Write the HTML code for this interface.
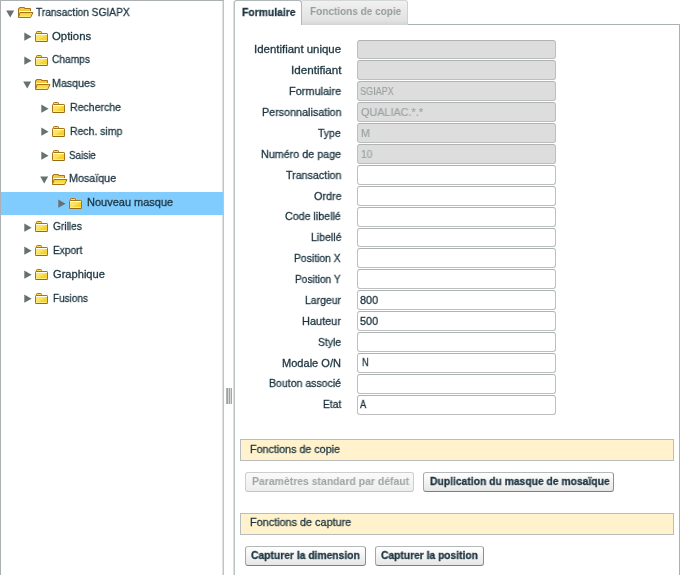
<!DOCTYPE html>
<html><head><meta charset="utf-8"><style>
html,body{margin:0;padding:0;width:680px;height:575px;overflow:hidden;background:#fff;}
body{position:relative;font-family:'Liberation Sans', sans-serif;}
.t{position:absolute;white-space:pre;font-size:11px;line-height:11px;transform-origin:0 0;will-change:transform;-webkit-text-stroke:0.3px;}
.ic{position:absolute;display:block;}
#left{position:absolute;left:0;top:0;width:222px;height:600px;border:1px solid #abb1b3;border-right-color:#c0c4c5;border-bottom:none;box-shadow:inset -1px 0 0 #dfe1e2;}
#sel{position:absolute;left:1px;top:192px;width:222px;height:23px;background:#80ccff;}
#grip{position:absolute;left:226px;top:388px;width:6px;height:16px;background:linear-gradient(90deg,#b0b3b3 0 1px,#9fa3a3 1px 2px,#d4d6d6 2px 3px,#9fa3a3 3px 4px,#d4d6d6 4px 5px,#a3a7a7 5px 6px);}
#panel{position:absolute;left:234px;top:24px;width:444px;height:600px;border:1px solid #aab3b3;border-left-color:#b9c0c0;border-bottom:none;box-shadow:-1px 0 0 #dde1e1;}
#tab1{position:absolute;left:234px;top:0;width:66px;height:24px;border:1px solid #b0b7b7;border-left-color:#b9c0c0;border-bottom:none;border-radius:3px 3px 0 0;background:#fff;box-shadow:-1px 0 0 #dde1e1;}
#tab2{position:absolute;left:301px;top:0;width:106px;height:24px;border-top:1px solid #d2d6d6;border-right:1px solid #cdd1d1;border-radius:2px 3px 0 0;background:linear-gradient(#f1f1f1,#e2e2e2 80%,#d3d5d5);}
.inp{position:absolute;left:357px;width:197px;height:18px;border:1px solid #bbbfbf;border-top-color:#adb2b2;border-radius:3px;background:#fff;}
.inp.dis{background:#dddddd;border-color:#babebe;border-top-color:#b0b4b4;}
.hdr{position:absolute;left:240px;width:432px;height:20px;border:1px solid #b8bcbc;background:#fff2cc;}
.btn{position:absolute;height:18px;border:1px solid #a3a8a8;border-top-color:#b3b8b8;border-right-color:#8a8f8f;border-bottom-color:#7a7f7f;border-radius:3px;background:linear-gradient(#ffffff,#e6e6e6);}
.btn.dis{border-color:#cbcfcf;border-bottom-color:#c0c4c4;background:linear-gradient(#fafafa,#ededed);}
</style></head><body>
<div id="left"></div>
<div id="sel"></div>
<div id="grip"></div>
<div id="panel"></div>
<div id="tab2"></div>
<div id="tab1"></div>
<div class="inp dis" style="top:40px;height:17px"></div>
<div class="inp dis" style="top:60px;height:18px"></div>
<div class="inp dis" style="top:81px;height:18px"></div>
<div class="inp dis" style="top:102px;height:18px"></div>
<div class="inp dis" style="top:123px;height:18px"></div>
<div class="inp dis" style="top:144px;height:18px"></div>
<div class="inp" style="top:165px;height:18px"></div>
<div class="inp" style="top:186px;height:18px"></div>
<div class="inp" style="top:207px;height:18px"></div>
<div class="inp" style="top:228px;height:17px"></div>
<div class="inp" style="top:248px;height:18px"></div>
<div class="inp" style="top:269px;height:18px"></div>
<div class="inp" style="top:290px;height:18px"></div>
<div class="inp" style="top:311px;height:18px"></div>
<div class="inp" style="top:332px;height:18px"></div>
<div class="inp" style="top:353px;height:18px"></div>
<div class="inp" style="top:374px;height:18px"></div>
<div class="inp" style="top:395px;height:18px"></div>
<div class="hdr" style="top:439px"></div>
<div class="hdr" style="top:513px"></div>
<div class="btn dis" style="left:245px;top:472px;width:167px"></div>
<div class="btn" style="left:423px;top:472px;width:189px"></div>
<div class="btn" style="left:245px;top:546px;width:119px"></div>
<div class="btn" style="left:375px;top:546px;width:107px"></div>
<svg class="ic" style="left:6px;top:10px" width="10" height="9" viewBox="0 0 10 9"><path d="M0.2 0.5 L8.2 0.5 L4.2 7.6 Z" fill="#687071"/></svg>
<svg class="ic" style="left:18px;top:7px" width="16" height="12" viewBox="0 0 16 12">
<defs><linearGradient id="g0" x1="0" y1="0" x2="0" y2="1"><stop offset="0" stop-color="#f3cf30"/><stop offset="0.6" stop-color="#f8df50"/><stop offset="1" stop-color="#fff49a"/></linearGradient></defs>
<path d="M0.5 10.5 V1.5 H1.5 V0.5 H6.5 V1.5 H12.5 V4.5" fill="#f1cb3c" stroke="#a8741a" stroke-width="1"/>
<rect x="1.5" y="4" width="11.5" height="1.6" fill="#ffffff"/>
<path d="M0.5 10.5 L2 5.5 H15 L12.6 10.5 Z" fill="url(#g0)" stroke="#a8741a" stroke-width="1" stroke-linejoin="round"/>
</svg>
<svg class="ic" style="left:24px;top:32px" width="9" height="10" viewBox="0 0 9 10"><path d="M0.3 0.6 L7.6 4.7 L0.3 8.8 Z" fill="#687071"/></svg>
<svg class="ic" style="left:35px;top:31px" width="14" height="12" viewBox="0 0 14 12">
<defs><linearGradient id="g1" x1="0" y1="0" x2="1" y2="1"><stop offset="0" stop-color="#fdeb86"/><stop offset="0.5" stop-color="#fbe060"/><stop offset="0.55" stop-color="#f7d638"/><stop offset="1" stop-color="#f3cc2c"/></linearGradient></defs>
<path d="M1.5 2.5 V1.3 Q1.5 0.5 2.3 0.5 H5.7 Q6.5 0.5 6.5 1.3 V2.5" fill="#fbe04a" stroke="#a8741a" stroke-width="1"/>
<rect x="0.5" y="2.5" width="12" height="8" rx="0.6" fill="url(#g1)" stroke="#a8741a" stroke-width="1"/>
<path d="M1 3.5 H12" stroke="#fffdf2" stroke-width="1"/>
<path d="M1.5 9.5 H11.5" stroke="#fff39a" stroke-width="1" opacity="0.8"/>
<path d="M0.5 10.5 H12.5" stroke="#8e5f10" stroke-width="1" opacity="0.5"/>
</svg>
<svg class="ic" style="left:24px;top:56px" width="9" height="10" viewBox="0 0 9 10"><path d="M0.3 0.6 L7.6 4.7 L0.3 8.8 Z" fill="#687071"/></svg>
<svg class="ic" style="left:35px;top:55px" width="14" height="12" viewBox="0 0 14 12">
<defs><linearGradient id="g2" x1="0" y1="0" x2="1" y2="1"><stop offset="0" stop-color="#fdeb86"/><stop offset="0.5" stop-color="#fbe060"/><stop offset="0.55" stop-color="#f7d638"/><stop offset="1" stop-color="#f3cc2c"/></linearGradient></defs>
<path d="M1.5 2.5 V1.3 Q1.5 0.5 2.3 0.5 H5.7 Q6.5 0.5 6.5 1.3 V2.5" fill="#fbe04a" stroke="#a8741a" stroke-width="1"/>
<rect x="0.5" y="2.5" width="12" height="8" rx="0.6" fill="url(#g2)" stroke="#a8741a" stroke-width="1"/>
<path d="M1 3.5 H12" stroke="#fffdf2" stroke-width="1"/>
<path d="M1.5 9.5 H11.5" stroke="#fff39a" stroke-width="1" opacity="0.8"/>
<path d="M0.5 10.5 H12.5" stroke="#8e5f10" stroke-width="1" opacity="0.5"/>
</svg>
<svg class="ic" style="left:23px;top:81px" width="10" height="9" viewBox="0 0 10 9"><path d="M0.2 0.5 L8.2 0.5 L4.2 7.6 Z" fill="#687071"/></svg>
<svg class="ic" style="left:35px;top:79px" width="16" height="12" viewBox="0 0 16 12">
<defs><linearGradient id="g3" x1="0" y1="0" x2="0" y2="1"><stop offset="0" stop-color="#f3cf30"/><stop offset="0.6" stop-color="#f8df50"/><stop offset="1" stop-color="#fff49a"/></linearGradient></defs>
<path d="M0.5 10.5 V1.5 H1.5 V0.5 H6.5 V1.5 H12.5 V4.5" fill="#f1cb3c" stroke="#a8741a" stroke-width="1"/>
<rect x="1.5" y="4" width="11.5" height="1.6" fill="#ffffff"/>
<path d="M0.5 10.5 L2 5.5 H15 L12.6 10.5 Z" fill="url(#g3)" stroke="#a8741a" stroke-width="1" stroke-linejoin="round"/>
</svg>
<svg class="ic" style="left:41px;top:104px" width="9" height="10" viewBox="0 0 9 10"><path d="M0.3 0.6 L7.6 4.7 L0.3 8.8 Z" fill="#687071"/></svg>
<svg class="ic" style="left:52px;top:102px" width="14" height="12" viewBox="0 0 14 12">
<defs><linearGradient id="g4" x1="0" y1="0" x2="1" y2="1"><stop offset="0" stop-color="#fdeb86"/><stop offset="0.5" stop-color="#fbe060"/><stop offset="0.55" stop-color="#f7d638"/><stop offset="1" stop-color="#f3cc2c"/></linearGradient></defs>
<path d="M1.5 2.5 V1.3 Q1.5 0.5 2.3 0.5 H5.7 Q6.5 0.5 6.5 1.3 V2.5" fill="#fbe04a" stroke="#a8741a" stroke-width="1"/>
<rect x="0.5" y="2.5" width="12" height="8" rx="0.6" fill="url(#g4)" stroke="#a8741a" stroke-width="1"/>
<path d="M1 3.5 H12" stroke="#fffdf2" stroke-width="1"/>
<path d="M1.5 9.5 H11.5" stroke="#fff39a" stroke-width="1" opacity="0.8"/>
<path d="M0.5 10.5 H12.5" stroke="#8e5f10" stroke-width="1" opacity="0.5"/>
</svg>
<svg class="ic" style="left:41px;top:127px" width="9" height="10" viewBox="0 0 9 10"><path d="M0.3 0.6 L7.6 4.7 L0.3 8.8 Z" fill="#687071"/></svg>
<svg class="ic" style="left:52px;top:126px" width="14" height="12" viewBox="0 0 14 12">
<defs><linearGradient id="g5" x1="0" y1="0" x2="1" y2="1"><stop offset="0" stop-color="#fdeb86"/><stop offset="0.5" stop-color="#fbe060"/><stop offset="0.55" stop-color="#f7d638"/><stop offset="1" stop-color="#f3cc2c"/></linearGradient></defs>
<path d="M1.5 2.5 V1.3 Q1.5 0.5 2.3 0.5 H5.7 Q6.5 0.5 6.5 1.3 V2.5" fill="#fbe04a" stroke="#a8741a" stroke-width="1"/>
<rect x="0.5" y="2.5" width="12" height="8" rx="0.6" fill="url(#g5)" stroke="#a8741a" stroke-width="1"/>
<path d="M1 3.5 H12" stroke="#fffdf2" stroke-width="1"/>
<path d="M1.5 9.5 H11.5" stroke="#fff39a" stroke-width="1" opacity="0.8"/>
<path d="M0.5 10.5 H12.5" stroke="#8e5f10" stroke-width="1" opacity="0.5"/>
</svg>
<svg class="ic" style="left:41px;top:151px" width="9" height="10" viewBox="0 0 9 10"><path d="M0.3 0.6 L7.6 4.7 L0.3 8.8 Z" fill="#687071"/></svg>
<svg class="ic" style="left:52px;top:150px" width="14" height="12" viewBox="0 0 14 12">
<defs><linearGradient id="g6" x1="0" y1="0" x2="1" y2="1"><stop offset="0" stop-color="#fdeb86"/><stop offset="0.5" stop-color="#fbe060"/><stop offset="0.55" stop-color="#f7d638"/><stop offset="1" stop-color="#f3cc2c"/></linearGradient></defs>
<path d="M1.5 2.5 V1.3 Q1.5 0.5 2.3 0.5 H5.7 Q6.5 0.5 6.5 1.3 V2.5" fill="#fbe04a" stroke="#a8741a" stroke-width="1"/>
<rect x="0.5" y="2.5" width="12" height="8" rx="0.6" fill="url(#g6)" stroke="#a8741a" stroke-width="1"/>
<path d="M1 3.5 H12" stroke="#fffdf2" stroke-width="1"/>
<path d="M1.5 9.5 H11.5" stroke="#fff39a" stroke-width="1" opacity="0.8"/>
<path d="M0.5 10.5 H12.5" stroke="#8e5f10" stroke-width="1" opacity="0.5"/>
</svg>
<svg class="ic" style="left:40px;top:176px" width="10" height="9" viewBox="0 0 10 9"><path d="M0.2 0.5 L8.2 0.5 L4.2 7.6 Z" fill="#687071"/></svg>
<svg class="ic" style="left:52px;top:174px" width="16" height="12" viewBox="0 0 16 12">
<defs><linearGradient id="g7" x1="0" y1="0" x2="0" y2="1"><stop offset="0" stop-color="#f3cf30"/><stop offset="0.6" stop-color="#f8df50"/><stop offset="1" stop-color="#fff49a"/></linearGradient></defs>
<path d="M0.5 10.5 V1.5 H1.5 V0.5 H6.5 V1.5 H12.5 V4.5" fill="#f1cb3c" stroke="#a8741a" stroke-width="1"/>
<rect x="1.5" y="4" width="11.5" height="1.6" fill="#ffffff"/>
<path d="M0.5 10.5 L2 5.5 H15 L12.6 10.5 Z" fill="url(#g7)" stroke="#a8741a" stroke-width="1" stroke-linejoin="round"/>
</svg>
<svg class="ic" style="left:58px;top:199px" width="9" height="10" viewBox="0 0 9 10"><path d="M0.3 0.6 L7.6 4.7 L0.3 8.8 Z" fill="#687071"/></svg>
<svg class="ic" style="left:69px;top:198px" width="14" height="12" viewBox="0 0 14 12">
<defs><linearGradient id="g8" x1="0" y1="0" x2="1" y2="1"><stop offset="0" stop-color="#fdeb86"/><stop offset="0.5" stop-color="#fbe060"/><stop offset="0.55" stop-color="#f7d638"/><stop offset="1" stop-color="#f3cc2c"/></linearGradient></defs>
<path d="M1.5 2.5 V1.3 Q1.5 0.5 2.3 0.5 H5.7 Q6.5 0.5 6.5 1.3 V2.5" fill="#fbe04a" stroke="#a8741a" stroke-width="1"/>
<rect x="0.5" y="2.5" width="12" height="8" rx="0.6" fill="url(#g8)" stroke="#a8741a" stroke-width="1"/>
<path d="M1 3.5 H12" stroke="#fffdf2" stroke-width="1"/>
<path d="M1.5 9.5 H11.5" stroke="#fff39a" stroke-width="1" opacity="0.8"/>
<path d="M0.5 10.5 H12.5" stroke="#8e5f10" stroke-width="1" opacity="0.5"/>
</svg>
<svg class="ic" style="left:24px;top:223px" width="9" height="10" viewBox="0 0 9 10"><path d="M0.3 0.6 L7.6 4.7 L0.3 8.8 Z" fill="#687071"/></svg>
<svg class="ic" style="left:35px;top:221px" width="14" height="12" viewBox="0 0 14 12">
<defs><linearGradient id="g9" x1="0" y1="0" x2="1" y2="1"><stop offset="0" stop-color="#fdeb86"/><stop offset="0.5" stop-color="#fbe060"/><stop offset="0.55" stop-color="#f7d638"/><stop offset="1" stop-color="#f3cc2c"/></linearGradient></defs>
<path d="M1.5 2.5 V1.3 Q1.5 0.5 2.3 0.5 H5.7 Q6.5 0.5 6.5 1.3 V2.5" fill="#fbe04a" stroke="#a8741a" stroke-width="1"/>
<rect x="0.5" y="2.5" width="12" height="8" rx="0.6" fill="url(#g9)" stroke="#a8741a" stroke-width="1"/>
<path d="M1 3.5 H12" stroke="#fffdf2" stroke-width="1"/>
<path d="M1.5 9.5 H11.5" stroke="#fff39a" stroke-width="1" opacity="0.8"/>
<path d="M0.5 10.5 H12.5" stroke="#8e5f10" stroke-width="1" opacity="0.5"/>
</svg>
<svg class="ic" style="left:24px;top:246px" width="9" height="10" viewBox="0 0 9 10"><path d="M0.3 0.6 L7.6 4.7 L0.3 8.8 Z" fill="#687071"/></svg>
<svg class="ic" style="left:35px;top:245px" width="14" height="12" viewBox="0 0 14 12">
<defs><linearGradient id="g10" x1="0" y1="0" x2="1" y2="1"><stop offset="0" stop-color="#fdeb86"/><stop offset="0.5" stop-color="#fbe060"/><stop offset="0.55" stop-color="#f7d638"/><stop offset="1" stop-color="#f3cc2c"/></linearGradient></defs>
<path d="M1.5 2.5 V1.3 Q1.5 0.5 2.3 0.5 H5.7 Q6.5 0.5 6.5 1.3 V2.5" fill="#fbe04a" stroke="#a8741a" stroke-width="1"/>
<rect x="0.5" y="2.5" width="12" height="8" rx="0.6" fill="url(#g10)" stroke="#a8741a" stroke-width="1"/>
<path d="M1 3.5 H12" stroke="#fffdf2" stroke-width="1"/>
<path d="M1.5 9.5 H11.5" stroke="#fff39a" stroke-width="1" opacity="0.8"/>
<path d="M0.5 10.5 H12.5" stroke="#8e5f10" stroke-width="1" opacity="0.5"/>
</svg>
<svg class="ic" style="left:24px;top:270px" width="9" height="10" viewBox="0 0 9 10"><path d="M0.3 0.6 L7.6 4.7 L0.3 8.8 Z" fill="#687071"/></svg>
<svg class="ic" style="left:35px;top:269px" width="14" height="12" viewBox="0 0 14 12">
<defs><linearGradient id="g11" x1="0" y1="0" x2="1" y2="1"><stop offset="0" stop-color="#fdeb86"/><stop offset="0.5" stop-color="#fbe060"/><stop offset="0.55" stop-color="#f7d638"/><stop offset="1" stop-color="#f3cc2c"/></linearGradient></defs>
<path d="M1.5 2.5 V1.3 Q1.5 0.5 2.3 0.5 H5.7 Q6.5 0.5 6.5 1.3 V2.5" fill="#fbe04a" stroke="#a8741a" stroke-width="1"/>
<rect x="0.5" y="2.5" width="12" height="8" rx="0.6" fill="url(#g11)" stroke="#a8741a" stroke-width="1"/>
<path d="M1 3.5 H12" stroke="#fffdf2" stroke-width="1"/>
<path d="M1.5 9.5 H11.5" stroke="#fff39a" stroke-width="1" opacity="0.8"/>
<path d="M0.5 10.5 H12.5" stroke="#8e5f10" stroke-width="1" opacity="0.5"/>
</svg>
<svg class="ic" style="left:24px;top:294px" width="9" height="10" viewBox="0 0 9 10"><path d="M0.3 0.6 L7.6 4.7 L0.3 8.8 Z" fill="#687071"/></svg>
<svg class="ic" style="left:35px;top:293px" width="14" height="12" viewBox="0 0 14 12">
<defs><linearGradient id="g12" x1="0" y1="0" x2="1" y2="1"><stop offset="0" stop-color="#fdeb86"/><stop offset="0.5" stop-color="#fbe060"/><stop offset="0.55" stop-color="#f7d638"/><stop offset="1" stop-color="#f3cc2c"/></linearGradient></defs>
<path d="M1.5 2.5 V1.3 Q1.5 0.5 2.3 0.5 H5.7 Q6.5 0.5 6.5 1.3 V2.5" fill="#fbe04a" stroke="#a8741a" stroke-width="1"/>
<rect x="0.5" y="2.5" width="12" height="8" rx="0.6" fill="url(#g12)" stroke="#a8741a" stroke-width="1"/>
<path d="M1 3.5 H12" stroke="#fffdf2" stroke-width="1"/>
<path d="M1.5 9.5 H11.5" stroke="#fff39a" stroke-width="1" opacity="0.8"/>
<path d="M0.5 10.5 H12.5" stroke="#8e5f10" stroke-width="1" opacity="0.5"/>
</svg>
<div class="t" style="left:36.00px;top:6.70px;font-weight:normal;color:#1d3540;transform:scaleX(0.9269);">Transaction SGIAPX</div>
<div class="t" style="left:52.30px;top:30.50px;font-weight:normal;color:#1d3540;transform:scaleX(1.0336);">Options</div>
<div class="t" style="left:52.30px;top:54.30px;font-weight:normal;color:#1d3540;transform:scaleX(0.9262);">Champs</div>
<div class="t" style="left:52.30px;top:78.10px;font-weight:normal;color:#1d3540;transform:scaleX(0.9682);">Masques</div>
<div class="t" style="left:70.20px;top:101.90px;font-weight:normal;color:#1d3540;transform:scaleX(0.9590);">Recherche</div>
<div class="t" style="left:70.20px;top:125.70px;font-weight:normal;color:#1d3540;transform:scaleX(0.9508);">Rech. simp</div>
<div class="t" style="left:68.80px;top:149.50px;font-weight:normal;color:#1d3540;transform:scaleX(0.8947);">Saisie</div>
<div class="t" style="left:69.10px;top:173.30px;font-weight:normal;color:#1d3540;transform:scaleX(0.9753);">Mosaïque</div>
<div class="t" style="left:86.80px;top:197.10px;font-weight:normal;color:#1d3540;transform:scaleX(0.9988);">Nouveau masque</div>
<div class="t" style="left:52.70px;top:220.90px;font-weight:normal;color:#1d3540;transform:scaleX(0.9252);">Grilles</div>
<div class="t" style="left:52.70px;top:244.70px;font-weight:normal;color:#1d3540;transform:scaleX(0.9233);">Export</div>
<div class="t" style="left:52.70px;top:268.50px;font-weight:normal;color:#1d3540;transform:scaleX(1.0107);">Graphique</div>
<div class="t" style="left:53.40px;top:293.20px;font-weight:normal;color:#1d3540;transform:scaleX(0.9073);">Fusions</div>
<div class="t" style="left:254.06px;top:44.40px;font-weight:normal;color:#1d3540;transform:scaleX(1.0391);">Identifiant unique</div>
<div class="t" style="left:290.54px;top:65.28px;font-weight:normal;color:#1d3540;transform:scaleX(1.0591);">Identifiant</div>
<div class="t" style="left:289.00px;top:86.16px;font-weight:normal;color:#1d3540;transform:scaleX(0.9914);">Formulaire</div>
<div class="t" style="left:261.50px;top:107.04px;font-weight:normal;color:#1d3540;transform:scaleX(0.9789);">Personnalisation</div>
<div class="t" style="left:318.40px;top:127.92px;font-weight:normal;color:#1d3540;transform:scaleX(0.9524);">Type</div>
<div class="t" style="left:261.00px;top:148.80px;font-weight:normal;color:#1d3540;transform:scaleX(0.9777);">Numéro de page</div>
<div class="t" style="left:285.70px;top:169.68px;font-weight:normal;color:#1d3540;transform:scaleX(0.9711);">Transaction</div>
<div class="t" style="left:313.50px;top:190.56px;font-weight:normal;color:#1d3540;transform:scaleX(0.9821);">Ordre</div>
<div class="t" style="left:285.30px;top:211.44px;font-weight:normal;color:#1d3540;transform:scaleX(0.9710);">Code libellé</div>
<div class="t" style="left:310.70px;top:232.32px;font-weight:normal;color:#1d3540;transform:scaleX(0.9563);">Libellé</div>
<div class="t" style="left:293.80px;top:253.20px;font-weight:normal;color:#1d3540;transform:scaleX(0.9404);">Position X</div>
<div class="t" style="left:294.60px;top:274.08px;font-weight:normal;color:#1d3540;transform:scaleX(0.9245);">Position Y</div>
<div class="t" style="left:304.70px;top:294.96px;font-weight:normal;color:#1d3540;transform:scaleX(0.9490);">Largeur</div>
<div class="t" style="left:301.80px;top:315.84px;font-weight:normal;color:#1d3540;transform:scaleX(0.9931);">Hauteur</div>
<div class="t" style="left:318.00px;top:336.72px;font-weight:normal;color:#1d3540;transform:scaleX(0.9451);">Style</div>
<div class="t" style="left:282.00px;top:357.60px;font-weight:normal;color:#1d3540;transform:scaleX(1.0043);">Modale O/N</div>
<div class="t" style="left:269.10px;top:378.48px;font-weight:normal;color:#1d3540;transform:scaleX(0.9574);">Bouton associé</div>
<div class="t" style="left:322.80px;top:399.36px;font-weight:normal;color:#1d3540;transform:scaleX(0.9328);">Etat</div>
<div class="t" style="left:360.20px;top:85.96px;font-weight:normal;color:#9aa1a1;transform:scaleX(0.8265);-webkit-text-stroke:0.15px;">SGIAPX</div>
<div class="t" style="left:360.60px;top:106.84px;font-weight:normal;color:#9aa1a1;transform:scaleX(0.9845);-webkit-text-stroke:0.15px;">QUALIAC.*.*</div>
<div class="t" style="left:360.60px;top:127.72px;font-weight:normal;color:#9aa1a1;transform:scaleX(0.9667);-webkit-text-stroke:0.15px;">M</div>
<div class="t" style="left:360.60px;top:148.60px;font-weight:normal;color:#9aa1a1;transform:scaleX(0.9408);-webkit-text-stroke:0.15px;">10</div>
<div class="t" style="left:360.10px;top:294.76px;font-weight:normal;color:#1d3540;transform:scaleX(0.9871);">800</div>
<div class="t" style="left:360.10px;top:315.64px;font-weight:normal;color:#1d3540;transform:scaleX(0.9871);">500</div>
<div class="t" style="left:361.60px;top:357.40px;font-weight:normal;color:#1d3540;transform:scaleX(0.8250);">N</div>
<div class="t" style="left:359.90px;top:399.16px;font-weight:normal;color:#1d3540;transform:scaleX(0.8500);">A</div>
<div class="t" style="left:241.80px;top:6.80px;font-weight:bold;color:#1d3540;transform:scaleX(0.9413);">Formulaire</div>
<div class="t" style="left:309.70px;top:6.00px;font-weight:bold;color:#959c9c;transform:scaleX(0.9110);-webkit-text-stroke:0;">Fonctions de copie</div>
<div class="t" style="left:250.20px;top:443.50px;font-weight:normal;color:#1d3540;transform:scaleX(0.9738);">Fonctions de copie</div>
<div class="t" style="left:250.20px;top:517.30px;font-weight:normal;color:#1d3540;transform:scaleX(0.9853);">Fonctions de capture</div>
<div class="t" style="left:251.90px;top:475.60px;font-weight:bold;color:#9ea4a4;transform:scaleX(0.9481);-webkit-text-stroke:0;">Paramètres standard par défaut</div>
<div class="t" style="left:429.60px;top:475.90px;font-weight:bold;color:#1d3540;transform:scaleX(0.9389);">Duplication du masque de mosaïque</div>
<div class="t" style="left:251.30px;top:549.50px;font-weight:bold;color:#1d3540;transform:scaleX(0.9363);">Capturer la dimension</div>
<div class="t" style="left:380.90px;top:549.50px;font-weight:bold;color:#1d3540;transform:scaleX(0.9320);">Capturer la position</div>
</body></html>
